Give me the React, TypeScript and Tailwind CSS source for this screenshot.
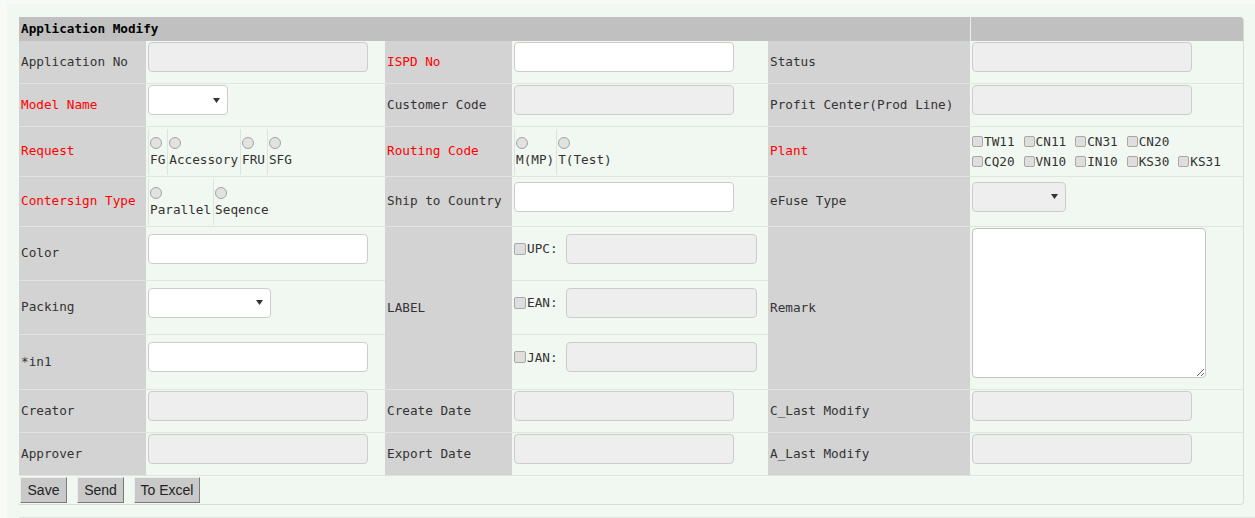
import React from "react";

type Kids = { children?: React.ReactNode };

function Label({ children, red, rowSpan }: Kids & { red?: boolean; rowSpan?: number }) {
  return (
    <td
      rowSpan={rowSpan}
      className={`bg-[#d3d3d3] pl-[2px] pb-[2px] align-middle border-b border-[#e2e2e2] ${red ? "text-[#ff0000]" : "text-[#333]"}`}
    >
      {children}
    </td>
  );
}

function Field({ children, rowSpan }: Kids & { rowSpan?: number }) {
  return (
    <td rowSpan={rowSpan} className="pl-[2px] align-middle border-b border-[#dfe6df]">
      {children}
    </td>
  );
}

function TextBox({ disabled, className = "w-[220px] mb-[10px]" }: { disabled?: boolean; className?: string }) {
  return (
    <input
      readOnly
      className={`block h-[30px] rounded-[4px] border border-[#cccccc] outline-none ${disabled ? "bg-[#eeeeee]" : "bg-white"} ${className}`}
    />
  );
}

function Select({ className, disabled }: { className: string; disabled?: boolean }) {
  return (
    <div
      className={`mb-[10px] flex h-[30px] items-center justify-end rounded-[4px] border border-[#cccccc] pr-[7px] ${disabled ? "bg-[#eeeeee]" : "bg-white"} ${className}`}
    >
      <svg width="7" height="5" viewBox="0 0 7 5">
        <path d="M0 0h7L3.5 5z" fill="#333" />
      </svg>
    </div>
  );
}

function Radio() {
  return <span className="block h-[12px] w-[12px] rounded-full border border-[#a3a3a3] bg-[#e2e2e2]" />;
}

function Check({ size = "h-[11px] w-[11px]" }: { size?: string }) {
  return <span className={`block shrink-0 rounded-[2px] border border-[#a8a8a8] bg-[#dedede] ${size}`} />;
}

function RadioGroup({ options }: { options: string[] }) {
  return (
    <div className="flex h-[46px]">
      {options.map((o) => (
        <div key={o} className="flex flex-col items-start justify-center border-l border-[#dde4dd] pl-[1px] pr-[2px]">
          <Radio />
          <span className="mt-[3px] leading-[15px] text-[#333]">{o}</span>
        </div>
      ))}
    </div>
  );
}

function PlantLine({ plants }: { plants: string[] }) {
  return (
    <div className="flex h-[20px] items-center">
      {plants.map((p) => (
        <span key={p} className="mr-[9px] flex items-center">
          <Check />
          <span className="ml-[1px] text-[#333]">{p}</span>
        </span>
      ))}
    </div>
  );
}

function LabelCode({ name }: { name: string }) {
  return (
    <div className="mb-[10px] flex items-center">
      <Check size="h-[12px] w-[12px]" />
      <span className="ml-[1px] text-[#333]">{name}</span>
      <TextBox disabled className="ml-[8px] w-[191px]" />
    </div>
  );
}

function Button({ children, className }: Kids & { className: string }) {
  return (
    <button
      className={`h-[26px] border border-t-[#ececec] border-l-[#ececec] border-r-[#7a7a7a] border-b-[#7a7a7a] bg-[#c9c9c9] font-['Liberation_Sans',Arial,sans-serif] text-[14px] text-[#222] ${className}`}
    >
      {children}
    </button>
  );
}

export default function App() {
  return (
    <div className="min-h-[518px] bg-[#f7faf7] pl-[7px] pt-[4px] font-['DejaVu_Sans_Mono',monospace] text-[12.7px] leading-[15px]">
      <div className="h-[514px] bg-[#f1f7f1] pl-[12px] pt-[13px]">
        <div className="w-[1225px] overflow-hidden rounded-tr-[4px] rounded-br-[4px] border-r border-b border-[#d6ddd6]">
          <table className="w-[1224px] table-fixed border-separate border-spacing-0">
            <colgroup>
              <col className="w-[127px]" />
              <col className="w-[239px]" />
              <col className="w-[127px]" />
              <col className="w-[256px]" />
              <col className="w-[202px]" />
              <col className="w-[273px]" />
            </colgroup>
            <tbody>
              {/* header */}
              <tr className="h-[24px]">
                <td colSpan={5} className="bg-[#c0c0c0] pl-[2px] pb-[1px] align-middle font-bold text-black">
                  Application Modify
                </td>
                <td className="border-l border-[#ececec] bg-[#c0c0c0]" />
              </tr>

              <tr className="h-[43px]">
                <Label>Application No</Label>
                <Field><TextBox disabled /></Field>
                <Label red>ISPD No</Label>
                <Field><TextBox /></Field>
                <Label>Status</Label>
                <Field><TextBox disabled /></Field>
              </tr>

              <tr className="h-[43px]">
                <Label red>Model Name</Label>
                <Field><Select className="w-[80px]" /></Field>
                <Label>Customer Code</Label>
                <Field><TextBox disabled /></Field>
                <Label>Profit Center(Prod Line)</Label>
                <Field><TextBox disabled /></Field>
              </tr>

              <tr className="h-[50px]">
                <Label red>Request</Label>
                <Field><RadioGroup options={["FG", "Accessory", "FRU", "SFG"]} /></Field>
                <Label red>Routing Code</Label>
                <Field><RadioGroup options={["M(MP)", "T(Test)"]} /></Field>
                <Label red>Plant</Label>
                <Field>
                  <PlantLine plants={["TW11", "CN11", "CN31", "CN20"]} />
                  <PlantLine plants={["CQ20", "VN10", "IN10", "KS30", "KS31"]} />
                </Field>
              </tr>

              <tr className="h-[50px]">
                <Label red>Contersign Type</Label>
                <Field><RadioGroup options={["Parallel", "Seqence"]} /></Field>
                <Label>Ship to Country</Label>
                <Field><TextBox /></Field>
                <Label>eFuse Type</Label>
                <Field><Select className="w-[94px]" disabled /></Field>
              </tr>

              <tr className="h-[54px]">
                <Label>Color</Label>
                <Field><TextBox /></Field>
                <Label rowSpan={3}>LABEL</Label>
                <Field><LabelCode name="UPC:" /></Field>
                <Label rowSpan={3}>Remark</Label>
                <Field rowSpan={3}>
                  <textarea
                    readOnly
                    className="mb-[10px] block h-[150px] w-[234px] rounded-[4px] border border-[#c4c4c4] bg-white outline-none"
                  />
                </Field>
              </tr>

              <tr className="h-[54px]">
                <Label>Packing</Label>
                <Field><Select className="w-[123px]" /></Field>
                <Field><LabelCode name="EAN:" /></Field>
              </tr>

              <tr className="h-[55px]">
                <Label>*in1</Label>
                <Field><TextBox /></Field>
                <Field><LabelCode name="JAN:" /></Field>
              </tr>

              <tr className="h-[43px]">
                <Label>Creator</Label>
                <Field><TextBox disabled /></Field>
                <Label>Create Date</Label>
                <Field><TextBox disabled /></Field>
                <Label>C_Last Modify</Label>
                <Field><TextBox disabled /></Field>
              </tr>

              <tr className="h-[43px]">
                <Label>Approver</Label>
                <Field><TextBox disabled /></Field>
                <Label>Export Date</Label>
                <Field><TextBox disabled /></Field>
                <Label>A_Last Modify</Label>
                <Field><TextBox disabled /></Field>
              </tr>

              <tr className="h-[28px]">
                <td colSpan={6} className="pl-[1px] align-middle">
                  <div className="flex items-center">
                    <Button className="w-[47px]">Save</Button>
                    <Button className="ml-[10px] w-[47px]">Send</Button>
                    <Button className="ml-[10px] w-[66px]">To Excel</Button>
                  </div>
                </td>
              </tr>
            </tbody>
          </table>
        </div>
        <div className="mt-[12px] border-t border-[#dce3dc]" />
      </div>
    </div>
  );
}
